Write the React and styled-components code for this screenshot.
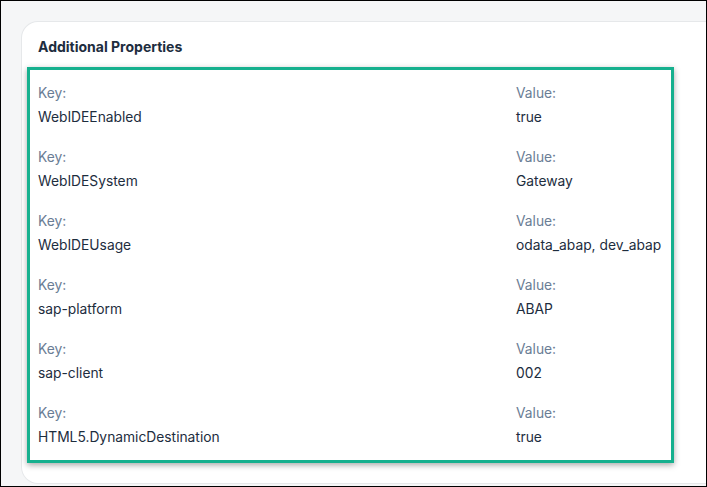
import styled, { createGlobalStyle } from 'styled-components';

const GlobalStyle = createGlobalStyle`
	html, body {
		margin: 0;
		padding: 0;
		background: #ffffff;
	}
	* {
		box-sizing: border-box;
	}
`;

const Frame = styled.div`
	width: 707px;
	height: 487px;
	border: 1px solid #000;
	background-color: #f5f6f7;
	overflow: hidden;
	padding: 21px 0 0 21px;
	font-family: Inter, 'Noto Sans', sans-serif;
`;

const Card = styled.section`
	width: 720px;
	height: 461px;
	background-color: #ffffff;
	border-radius: 16px;
	box-shadow: 0 0 0 1px #e6e8ea;
	padding: 16px 0 0 16px;
`;

const Heading = styled.h2`
	margin: 0 0 11px;
	font-size: 14px;
	font-weight: 700;
	line-height: 18px;
	color: #1d2d3e;
`;

const Highlight = styled.div`
	width: 647px;
	margin-left: -11px;
	border: 3px solid #16b08e;
	box-shadow: 0 2px 6px rgba(0, 0, 0, 0.35);
	padding: 15px 8px 15px 8px;
	display: flex;
	flex-direction: column;
	gap: 24px;
`;

const Row = styled.div`
	display: grid;
	grid-template-columns: 478px 1fr;
`;

const Field = styled.div`
	display: flex;
	flex-direction: column;
	gap: 8px;
`;

const Label = styled.span`
	font-size: 13.8px;
	line-height: 16px;
	color: #6a7d95;
`;

const Value = styled.span`
	font-size: 13.8px;
	line-height: 16px;
	color: #1d2d3e;
`;

const properties = [
	{ key: 'WebIDEEnabled', value: 'true' },
	{ key: 'WebIDESystem', value: 'Gateway' },
	{ key: 'WebIDEUsage', value: 'odata_abap, dev_abap' },
	{ key: 'sap-platform', value: 'ABAP' },
	{ key: 'sap-client', value: '002' },
	{ key: 'HTML5.DynamicDestination', value: 'true' },
];

function App() {
	return (
		<>
			<GlobalStyle />
			<Frame>
				<Card>
					<Heading>Additional Properties</Heading>
					<Highlight>
						{properties.map(p => (
							<Row key={p.key}>
								<Field>
									<Label>Key:</Label>
									<Value>{p.key}</Value>
								</Field>
								<Field>
									<Label>Value:</Label>
									<Value>{p.value}</Value>
								</Field>
							</Row>
						))}
					</Highlight>
				</Card>
			</Frame>
		</>
	);
}

export default App;
